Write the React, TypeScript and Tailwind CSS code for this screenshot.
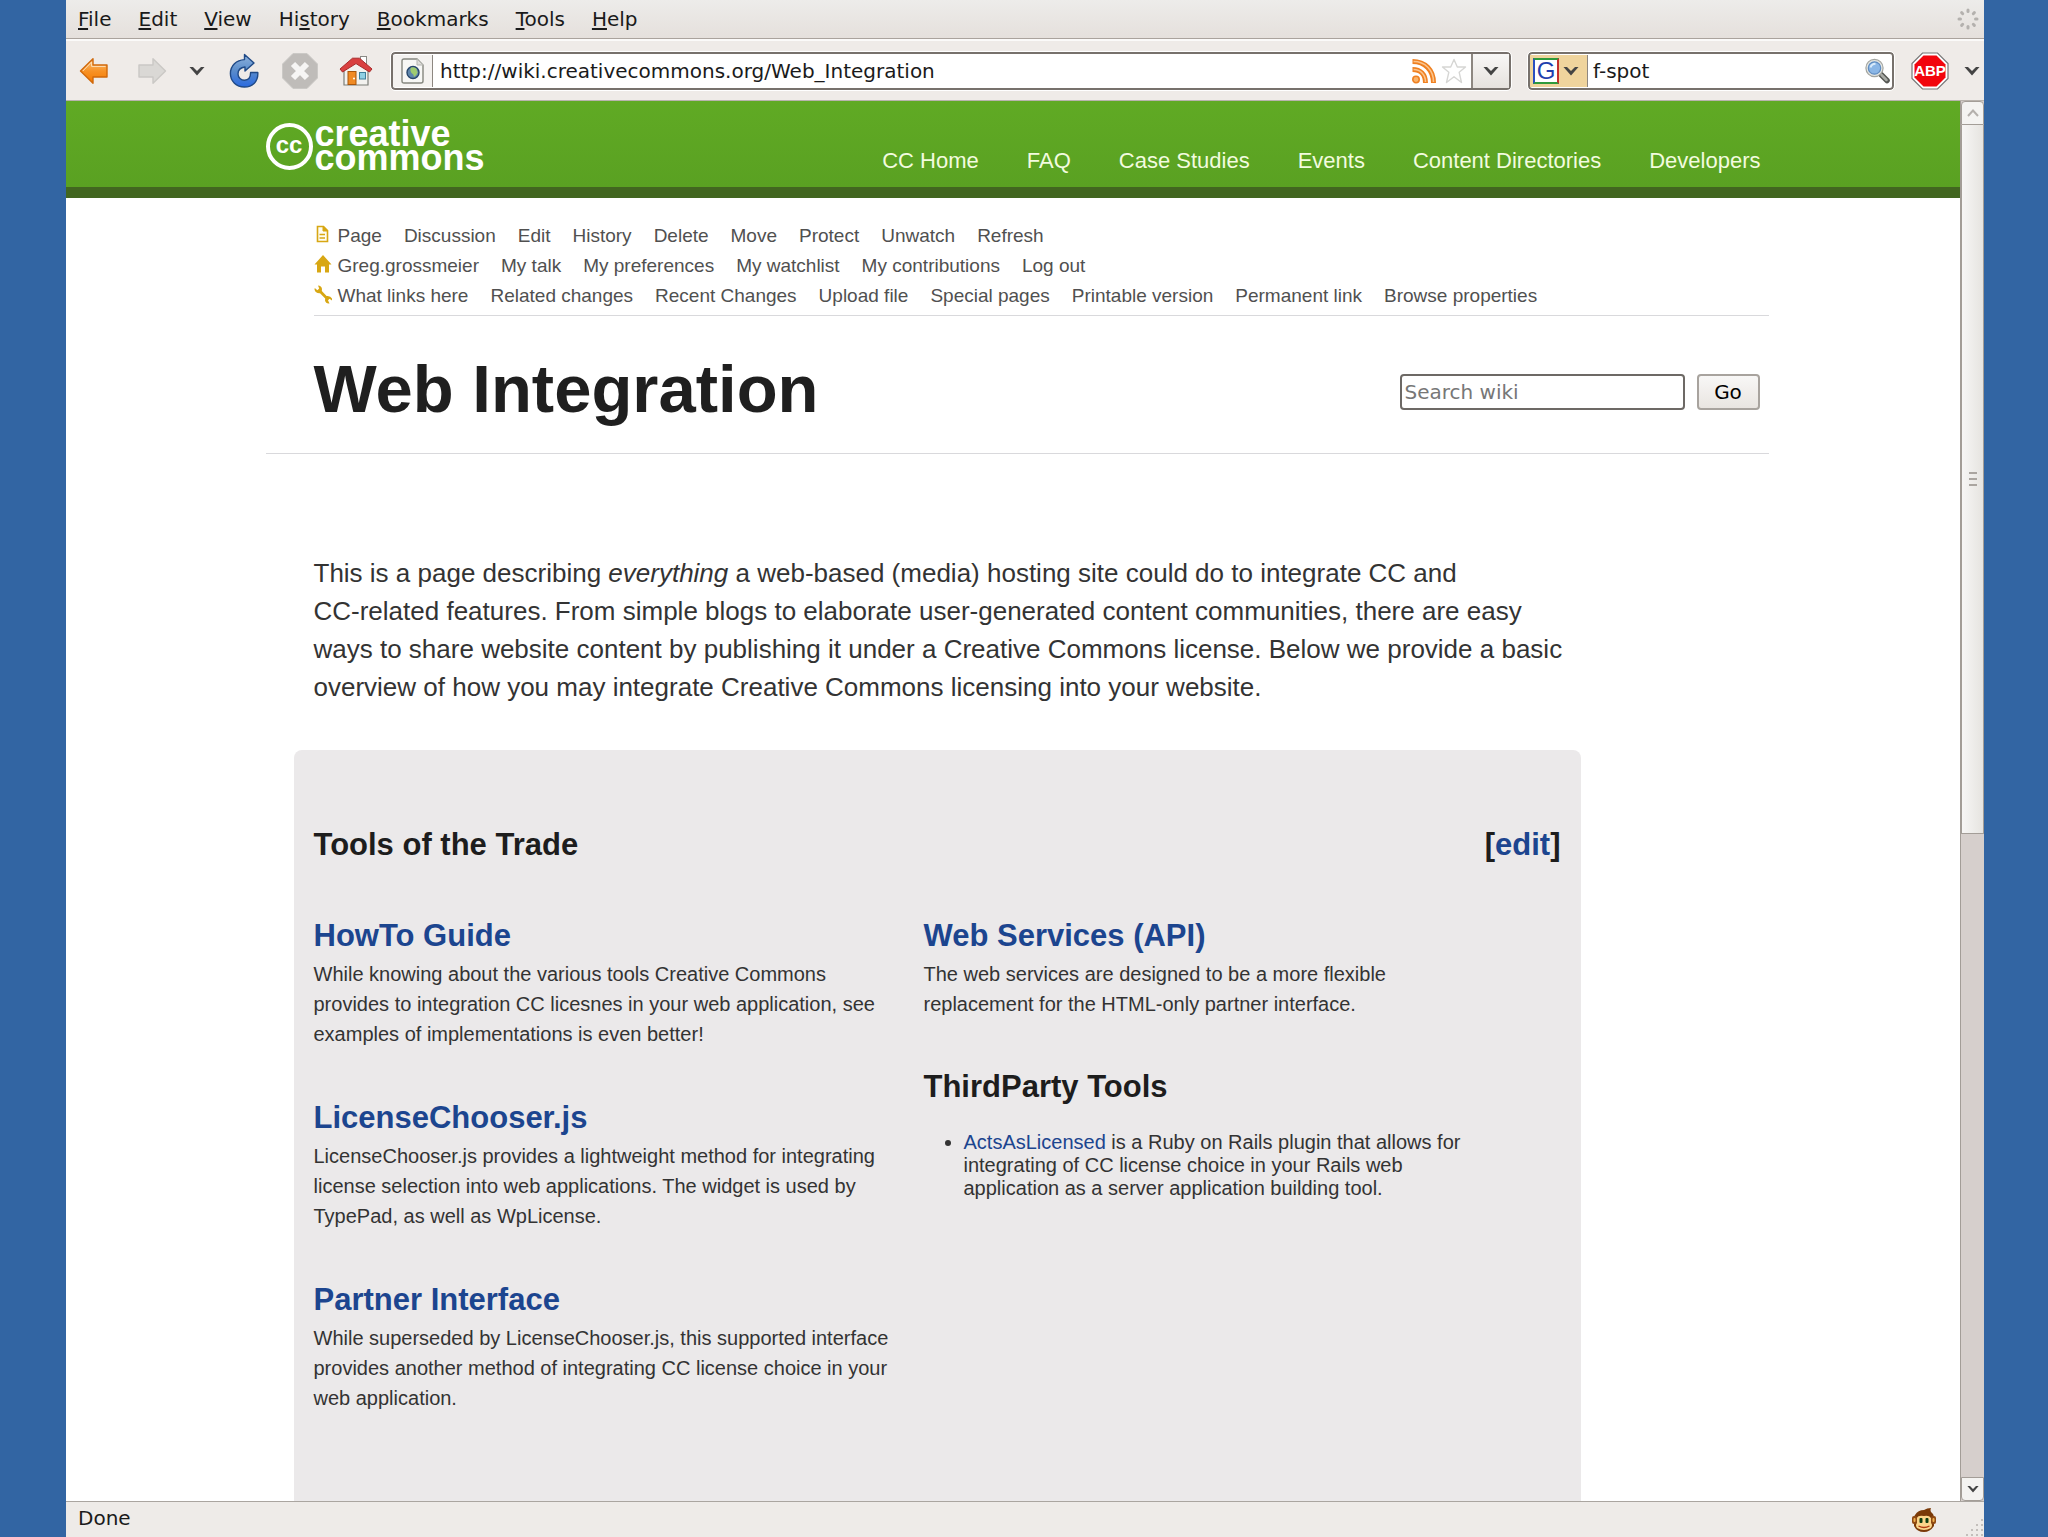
import type { ReactNode } from "react";

type MenuItem = {
  before: string;
  key: string;
  after: string;
};

type ToolSectionProps = {
  title: string;
  href?: string;
  children: ReactNode;
};

const menuItems: MenuItem[] = [
  { before: "", key: "F", after: "ile" },
  { before: "", key: "E", after: "dit" },
  { before: "", key: "V", after: "iew" },
  { before: "Hi", key: "s", after: "tory" },
  { before: "", key: "B", after: "ookmarks" },
  { before: "", key: "T", after: "ools" },
  { before: "", key: "H", after: "elp" },
];

const siteLinks = [
  "CC Home",
  "FAQ",
  "Case Studies",
  "Events",
  "Content Directories",
  "Developers",
];

const pageActions = [
  "Page",
  "Discussion",
  "Edit",
  "History",
  "Delete",
  "Move",
  "Protect",
  "Unwatch",
  "Refresh",
];

const userActions = [
  "Greg.grossmeier",
  "My talk",
  "My preferences",
  "My watchlist",
  "My contributions",
  "Log out",
];

const wikiTools = [
  "What links here",
  "Related changes",
  "Recent Changes",
  "Upload file",
  "Special pages",
  "Printable version",
  "Permanent link",
  "Browse properties",
];

function Chevron({ className }: { className: string }) {
  return (
    <svg viewBox="0 0 16 10" className={className} aria-hidden="true">
      <path d="M0.5 1H4L8 5L12 1H15.500L8 9.500Z" fill="#444" />
    </svg>
  );
}

function BackIcon() {
  return (
    <svg viewBox="0 0 30 28" className="h-7 w-[30px]" aria-hidden="true">
      <defs>
        <linearGradient id="back" x1="0" y1="0" x2="0" y2="1">
          <stop offset="0" stopColor="#fcc27c" />
          <stop offset="0.5" stopColor="#f79226" />
          <stop offset="1" stopColor="#f57900" />
        </linearGradient>
      </defs>
      <path
        d="M1.5 14 14 1.8V8H28V20H14V26.2Z"
        fill="url(#back)"
        stroke="#d0680a"
        strokeWidth="1.4"
        strokeLinejoin="round"
      />
      <path d="M3.8 14 12.6 5V9.4H26.6" fill="none" stroke="#fde0b8" />
    </svg>
  );
}

function ForwardIcon() {
  return (
    <svg viewBox="0 0 30 28" className="h-7 w-[30px]" aria-hidden="true">
      <path
        d="M28.5 14 16 1.8V8H2V20H16V26.2Z"
        fill="#dad8d5"
        stroke="#cac8c5"
        strokeWidth="1.4"
        strokeLinejoin="round"
      />
    </svg>
  );
}

function ReloadIcon() {
  return (
    <svg viewBox="0 0 30 36" className="h-9 w-[30px]" aria-hidden="true">
      <defs>
        <linearGradient id="reload" x1="0" y1="0" x2="0" y2="1">
          <stop offset="0" stopColor="#8fb3dd" />
          <stop offset="0.5" stopColor="#5a8ccb" />
          <stop offset="1" stopColor="#2a6ae0" />
        </linearGradient>
      </defs>
      <path
        d="M15.5 1.500 25 10 16 18V14C11 14.500 9 17.500 9 21C9 24.500 12 27.200 15.500 27.200C19 27.200 21.600 25 21.600 19.500H28.800C29.400 28.600 23.400 34 15.400 34C7.400 34 1.400 28.400 1.400 20.600C1.400 12.600 7.400 7 15.500 6.600Z"
        fill="url(#reload)"
        stroke="#204a87"
        strokeWidth="1.4"
        strokeLinejoin="round"
      />
    </svg>
  );
}

function StopIcon() {
  return (
    <svg viewBox="0 0 38 38" className="size-[38px]" aria-hidden="true">
      <path
        d="M12 1.5H26L36.5 12V26L26 36.5H12L1.5 26V12Z"
        fill="#bfbcb9"
        stroke="#cbc9c6"
      />
      <path
        d="M12 12 26 26M26 12 12 26"
        stroke="#f6f5f4"
        strokeWidth="6"
      />
    </svg>
  );
}

function HomeIcon() {
  return (
    <svg viewBox="0 0 34 32" className="h-8 w-[34px]" aria-hidden="true">
      <rect x="21.5" y="1.5" width="6" height="10" fill="#fff" stroke="#8a8a86" />
      <path d="M5 15 17 5 29 15V30H5Z" fill="#f3f2ef" stroke="#7d7f79" strokeWidth="1.2" />
      <path
        d="M1 14 13.5 3.2H20.5L33 14 30.5 17 17 8.6 3.5 17Z"
        fill="#d94040"
        stroke="#a82a2a"
        strokeLinejoin="round"
      />
      <rect x="9" y="16.5" width="8" height="13" fill="#f08a24" stroke="#a8560c" />
      <circle cx="15" cy="23.5" r="1" fill="#fff" />
      <rect x="20.5" y="17.5" width="6" height="6.5" fill="#8fd0e4" stroke="#3c7f9c" />
    </svg>
  );
}

function SiteIcon() {
  return (
    <svg viewBox="0 0 24 26" className="h-[26px] w-6" aria-hidden="true">
      <path
        d="M3 1H16L22 7V23Q22 25 20 25H3Q1 25 1 23V3Q1 1 3 1Z"
        fill="#f7f7f5"
        stroke="#85877f"
        strokeWidth="1.4"
      />
      <path d="M16 1V7H22" fill="#dededa" stroke="#b4b5b0" />
      <circle cx="12" cy="14.5" r="6" fill="#5f86ac" stroke="#27466b" strokeWidth="1.4" />
      <path
        d="M10 9.500Q15 8.500 16 12Q15 13 16.800 14Q15.500 18 13 19Q13 16 10.500 15Q8.500 12 10 9.500Z"
        fill="#9fcb70"
      />
    </svg>
  );
}

function FeedIcon() {
  return (
    <svg viewBox="0 0 26 26" className="size-[26px]" aria-hidden="true">
      <g fill="none" stroke="#ef8021" strokeWidth="5">
        <path d="M1.5 3.5C14 3.5 22.5 12 22.5 25" />
        <path d="M1.5 11.5C9.5 11.5 14.5 16.5 14.5 25" />
      </g>
      <g fill="none" stroke="#fbc48c" strokeWidth="1.6">
        <path d="M2.5 3.5C14 3.5 22.5 12 22.5 24" />
        <path d="M2.5 11.5C9.5 11.5 14.5 16.5 14.5 24" />
      </g>
      <circle cx="5" cy="21.5" r="3.2" fill="#f9b269" stroke="#ef8021" strokeWidth="1.6" />
    </svg>
  );
}

function StarIcon() {
  return (
    <svg viewBox="0 0 26 26" className="size-[26px]" aria-hidden="true">
      <path
        d="M13 1.5 16.3 9H24.5L18.2 14.3 20.5 24.5 13 18.8 5.5 24.5 7.8 14.3 1.5 9H9.7Z"
        fill="#fff"
        stroke="#d6d6d4"
        strokeWidth="1.4"
        strokeLinejoin="round"
      />
    </svg>
  );
}

function MagnifierIcon() {
  return (
    <svg viewBox="0 0 26 26" className="size-[26px]" aria-hidden="true">
      <path d="M16 15.5 23 22.5" stroke="#555753" strokeWidth="5.5" strokeLinecap="round" />
      <path d="M17.5 17 22.5 22" stroke="#a9aba6" strokeWidth="2.5" strokeLinecap="round" />
      <circle cx="10.5" cy="10" r="8.6" fill="#e4e6e3" stroke="#a3a5a0" strokeWidth="1.2" />
      <circle cx="10.5" cy="10" r="6.2" fill="#8ab6e6" stroke="#5f8cc0" strokeWidth="1.2" />
      <path d="M6.5 9.5Q7.5 6 11.5 5.8" fill="none" stroke="#d8eafa" strokeWidth="2" />
    </svg>
  );
}

function AdblockIcon() {
  return (
    <svg viewBox="0 0 38 38" className="size-[38px]" aria-hidden="true">
      <path
        d="M11.5 1H26.5L37 11.5V26.5L26.5 37H11.5L1 26.5V11.5Z"
        fill="#fff"
        stroke="#777"
        strokeWidth="1.2"
      />
      <path d="M12.5 3.5H25.5L34.5 12.5V25.5L25.5 34.5H12.5L3.5 25.500V12.5Z" fill="#f2050d" />
      <text
        x="19"
        y="24"
        textAnchor="middle"
        fontFamily="Liberation Sans, sans-serif"
        fontSize="15"
        fontWeight="700"
        fill="#fff"
      >
        ABP
      </text>
    </svg>
  );
}

function Spinner() {
  const angles = [0, 45, 90, 135, 180, 225, 270, 315];

  return (
    <svg viewBox="0 0 24 24" className="size-6" aria-hidden="true">
      {angles.map((angle) => (
        <rect
          key={angle}
          x="10.5"
          y="1.5"
          width="3"
          height="4.5"
          rx="1.5"
          fill="#b4b1ae"
          transform={`rotate(${angle} 12 12)`}
        />
      ))}
    </svg>
  );
}

function PageIcon() {
  return (
    <svg viewBox="0 0 18 18" className="size-[18px]" aria-hidden="true">
      <path
        d="M3.5 1.5H9.5L13.5 5.5V16.5H3.5Z"
        fill="#fffdf3"
        stroke="#d8a713"
        strokeWidth="1.6"
      />
      <path d="M9 2V6H13Z" fill="#d8a713" stroke="#d8a713" />
      <path d="M5.5 9.5H11M5.5 13H11" stroke="#d8a713" strokeWidth="1.4" />
    </svg>
  );
}

function HouseIcon() {
  return (
    <svg viewBox="0 0 18 18" className="size-[18px]" aria-hidden="true">
      <path d="M9 0 17.5 9.5H15V17.5H11V11.5H7V17.5H3V9.5H0.5Z" fill="#d8a713" />
    </svg>
  );
}

function WrenchIcon() {
  return (
    <svg viewBox="0 0 19 19" className="size-[19px]" aria-hidden="true">
      <path
        d="M4 0.5Q7.5 0.5 8 4L7.8 6L12.6 11Q16.5 10.5 18 13.5V15.5L15.5 13.8L14 15.2L15.5 18.5Q11.8 19 11 15.5L11.2 13.6L6 8.2Q1.5 8.5 0.5 4.5L0.8 3L3.4 5.2L5.2 3.6Z"
        fill="#d8a713"
      />
    </svg>
  );
}

function MonkeyIcon() {
  return (
    <svg viewBox="0 0 26 26" className="size-[26px]" aria-hidden="true">
      <path
        d="M4 8Q7 3 13 3Q16 1 20 1Q19 3 20 5Q23 7 23 11V19Q19 25 13 25Q6 25 3 19V11Q3 9 4 8Z"
        fill="#7a3a08"
      />
      <rect x="1" y="9" width="5" height="8" rx="2" fill="#8f4a12" />
      <rect x="20" y="9" width="5" height="8" rx="2" fill="#8f4a12" />
      <rect x="2.5" y="11" width="2" height="4" rx="1" fill="#f0b050" />
      <rect x="21.5" y="11" width="2" height="4" rx="1" fill="#f0b050" />
      <path
        d="M6 11Q7 8 13 9Q18 8 20 11V16Q22 18 20 21Q13 25 6 21Q4 18 6 16Z"
        fill="#fbd58a"
      />
      <rect x="8.5" y="11" width="3" height="5" rx="1" fill="#0d3d10" />
      <rect x="14.5" y="11" width="3" height="5" rx="1" fill="#0d3d10" />
      <path d="M7.5 19Q13 22 18.5 19" fill="none" stroke="#b03a10" strokeWidth="1.4" />
    </svg>
  );
}

function ResizeGrip() {
  const rows = [1, 2, 3, 4];

  return (
    <svg viewBox="0 0 20 20" className="size-5 self-end" aria-hidden="true">
      {rows.map((row) =>
        rows
          .filter((column) => column + row > 4)
          .map((column) => (
            <circle
              key={`${row}-${column}`}
              cx={column * 5 - 2}
              cy={row * 5 - 2}
              r="1"
              fill="#b5b1ac"
            />
          )),
      )}
    </svg>
  );
}

function MenuBar() {
  return (
    <div className="flex h-[39px] shrink-0 items-center justify-between border-b border-[#aaa39d] bg-linear-to-b from-[#edecea] to-[#e5e0dc] pr-1 pl-3">
      <nav className="flex gap-[27px]">
        {menuItems.map((item) => (
          <button key={item.key + item.after} type="button" className="text-xl leading-7">
            {item.before}
            <span className="underline decoration-2 underline-offset-2">{item.key}</span>
            {item.after}
          </button>
        ))}
      </nav>
      <Spinner />
    </div>
  );
}

function Toolbar() {
  return (
    <div className="flex h-[62px] shrink-0 items-center border-t-2 border-b border-t-[#fbfaf9] border-b-[#b9b3ad] bg-[#efebe8] pl-[13px]">
      <div className="flex items-center">
        <button type="button" aria-label="Back" className="mr-7">
          <BackIcon />
        </button>
        <button type="button" aria-label="Forward" className="mr-[22px]">
          <ForwardIcon />
        </button>
        <button type="button" aria-label="Recent pages" className="mr-6">
          <Chevron className="h-[10px] w-4" />
        </button>
        <button type="button" aria-label="Reload" className="mr-[22px]">
          <ReloadIcon />
        </button>
        <button type="button" aria-label="Stop" className="mr-5">
          <StopIcon />
        </button>
        <button type="button" aria-label="Home" className="mr-[18px]">
          <HomeIcon />
        </button>
      </div>

      <div className="flex h-[38px] flex-1 items-stretch rounded border-2 border-[#77716c] bg-white outline outline-white">
        <div className="my-px flex w-10 items-center justify-center border-r border-[#8d8781] bg-[#f4f2f0]">
          <SiteIcon />
        </div>
        <input
          type="text"
          aria-label="Location"
          defaultValue="http://wiki.creativecommons.org/Web_Integration"
          className="min-w-0 flex-1 bg-transparent pl-[7px] text-xl outline-none"
        />
        <div className="flex items-center gap-1 pr-1">
          <FeedIcon />
          <StarIcon />
        </div>
        <button
          type="button"
          aria-label="Show history"
          className="flex w-[38px] items-center justify-center border-l-2 border-[#8d8781] bg-linear-to-b from-[#f8f7f6] to-[#e6e2de]"
        >
          <Chevron className="h-[10px] w-4" />
        </button>
      </div>

      <form
        className="ml-[17px] flex h-[38px] w-[366px] items-stretch rounded border-2 border-[#77716c] bg-white outline outline-white"
        onSubmit={(event) => event.preventDefault()}
      >
        <button
          type="button"
          aria-label="Search engine"
          className="my-px flex w-[58px] items-center gap-1 border-r border-[#8d8781] bg-[#efd49d] pl-[3px]"
        >
          <span className="flex size-[26px] items-center justify-center border-2 border-t-[#2f9a3c] border-r-[#c5302c] border-b-[#2f9a3c] border-l-[#2b4fc0] bg-white font-['Liberation_Sans',sans-serif] text-2xl leading-none text-[#1f3fae]">
            G
          </span>
          <Chevron className="h-[10px] w-4" />
        </button>
        <input
          type="text"
          aria-label="Search the web"
          defaultValue="f-spot"
          className="min-w-0 flex-1 bg-transparent pl-[5px] text-xl outline-none"
        />
        <button type="submit" aria-label="Search" className="pr-0.5">
          <MagnifierIcon />
        </button>
      </form>

      <button type="button" aria-label="Adblock Plus" className="ml-[17px]">
        <AdblockIcon />
      </button>
      <button type="button" aria-label="Adblock Plus menu" className="mr-1 ml-[15px]">
        <Chevron className="h-[10px] w-4" />
      </button>
    </div>
  );
}

function Logo() {
  return (
    <a href="#" className="mb-[17px] flex items-end gap-0.5 font-bold text-white">
      <span className="flex size-[47px] items-center justify-center rounded-full border-4 border-white pb-1 text-2xl leading-none">
        cc
      </span>
      <span className="text-4xl leading-6">
        creative
        <br />
        commons
      </span>
    </a>
  );
}

function SiteHeader() {
  return (
    <header className="border-b-[11px] border-[#426620] bg-linear-to-b from-[#60aa24] to-[#5aa122] pl-2">
      <div className="mx-auto flex h-[86px] max-w-[1503px] items-end justify-between pr-2">
        <Logo />
        <nav className="mb-3 flex gap-12">
          {siteLinks.map((link) => (
            <a key={link} href="#" className="text-[22px] leading-7 text-[#f2fbdf]">
              {link}
            </a>
          ))}
        </nav>
      </div>
    </header>
  );
}

function ActionRow({ icon, links }: { icon: ReactNode; links: string[] }) {
  return (
    <div className="flex h-[30px] items-center">
      <span className="w-6 pb-1">{icon}</span>
      <ul className="flex gap-[22px]">
        {links.map((link) => (
          <li key={link}>
            <a href="#" className="text-[19px] leading-[30px] whitespace-nowrap text-[#505050]">
              {link}
            </a>
          </li>
        ))}
      </ul>
    </div>
  );
}

function ToolSection({ title, href, children }: ToolSectionProps) {
  return (
    <section>
      <h3 className="text-[31px] leading-10 font-bold text-[#1d1d1d]">
        {href ? (
          <a href={href} className="text-[#1c458f]">
            {title}
          </a>
        ) : (
          title
        )}
      </h3>
      {children}
    </section>
  );
}

function WikiPage() {
  return (
    <main className="min-w-0 flex-1 overflow-hidden bg-white font-['Liberation_Sans',Arial,sans-serif] text-[#333]">
      <SiteHeader />

      <div className="pl-2">
        <div className="mx-auto max-w-[1503px]">
          <div className="ml-12 border-b border-[#d9d9dc] pt-[23px] pb-1">
            <ActionRow icon={<PageIcon />} links={pageActions} />
            <ActionRow icon={<HouseIcon />} links={userActions} />
            <ActionRow icon={<WrenchIcon />} links={wikiTools} />
          </div>

          <div className="flex items-center justify-between border-b border-[#d9d9dc] pt-[33px] pr-[9px] pb-6 pl-12">
            <h1 className="text-[67px] leading-[80px] font-bold text-[#1f1f1f]">Web Integration</h1>
            <form
              className="flex gap-3 pt-1.5 font-['DejaVu_Sans',sans-serif] text-xl"
              onSubmit={(event) => event.preventDefault()}
            >
              <input
                type="text"
                aria-label="Search wiki"
                placeholder="Search wiki"
                className="h-9 w-[285px] rounded border-2 border-[#6d6965] bg-white px-[3px] outline-none placeholder:text-[#777]"
              />
              <button
                type="submit"
                className="h-9 w-[63px] rounded border-2 border-[#a8a39e] bg-linear-to-b from-[#f8f7f6] to-[#e9e5e1] leading-8 text-black"
              >
                Go
              </button>
            </form>
          </div>

          <p className="mt-[100px] ml-12 text-[26px] leading-[38px] whitespace-nowrap">
            This is a page describing <em>everything</em> a web-based (media) hosting site could do
            to integrate CC and
            <br />
            CC-related features. From simple blogs to elaborate user-generated content communities,
            there are easy
            <br />
            ways to share website content by publishing it under a Creative Commons license. Below
            we provide a basic
            <br />
            overview of how you may integrate Creative Commons licensing into your website.
          </p>

          <div className="mt-11 mr-[188px] ml-7 min-h-[800px] rounded-t-lg bg-[#ebe9ea] px-5 pt-[75px]">
            <div className="flex justify-between text-[31px] leading-10 font-bold text-[#1d1d1d]">
              <h2>Tools of the Trade</h2>
              <span>
                [
                <a href="#" className="text-[#1c458f]">
                  edit
                </a>
                ]
              </span>
            </div>

            <div className="mt-[51px] grid grid-cols-[590px_1fr] gap-x-5">
              <div className="flex flex-col gap-[49px]">
                <ToolSection title="HowTo Guide" href="#">
                  <p className="mt-[3px] pr-2 text-xl leading-[30px]">
                    While knowing about the various tools Creative Commons provides to integration
                    CC licesnes in your web application, see examples of implementations is even
                    better!
                  </p>
                </ToolSection>
                <ToolSection title="LicenseChooser.js" href="#">
                  <p className="mt-[3px] pr-2 text-xl leading-[30px]">
                    LicenseChooser.js provides a lightweight method for integrating license
                    selection into web applications. The widget is used by TypePad, as well as
                    WpLicense.
                  </p>
                </ToolSection>
                <ToolSection title="Partner Interface" href="#">
                  <p className="mt-[3px] pr-2 text-xl leading-[30px]">
                    While superseded by LicenseChooser.js, this supported interface provides
                    another method of integrating CC license choice in your web application.
                  </p>
                </ToolSection>
              </div>

              <div className="flex flex-col gap-12">
                <ToolSection title="Web Services (API)" href="#">
                  <p className="mt-[3px] max-w-[560px] text-xl leading-[30px]">
                    The web services are designed to be a more flexible replacement for the
                    HTML-only partner interface.
                  </p>
                </ToolSection>
                <ToolSection title="ThirdParty Tools">
                  <ul className="mt-6 list-disc pl-10 text-xl leading-[23px]">
                    <li className="max-w-[540px]">
                      <a href="#" className="text-[#1c458f]">
                        ActsAsLicensed
                      </a>{" "}
                      is a Ruby on Rails plugin that allows for integrating of CC license choice in
                      your Rails web application as a server application building tool.
                    </li>
                  </ul>
                </ToolSection>
              </div>
            </div>
          </div>
        </div>
      </div>
    </main>
  );
}

function ScrollBar() {
  return (
    <div className="flex w-6 shrink-0 flex-col border-l border-[#a39d97] bg-[#d6cfcc]">
      <button
        type="button"
        aria-label="Scroll up"
        className="flex h-6 shrink-0 items-center justify-center rounded-t border border-[#a39d97] bg-[#f4f3f1]"
      >
        <svg viewBox="0 0 12 8" className="h-2 w-3" aria-hidden="true">
          <path d="M1 7 6 1.5 11 7" fill="none" stroke="#b4b0ac" strokeWidth="2" />
        </svg>
      </button>
      <div className="flex min-h-0 flex-1 flex-col">
        <div className="flex flex-[11] flex-col items-center justify-center gap-1 border border-t-0 border-[#a39d97] bg-linear-to-r from-[#f7f6f5] to-[#e6e4e0]">
          <span className="h-0.5 w-2 bg-[#aaa5a0]" />
          <span className="h-0.5 w-2 bg-[#aaa5a0]" />
          <span className="h-0.5 w-2 bg-[#aaa5a0]" />
        </div>
        <div className="flex-[10]" />
      </div>
      <button
        type="button"
        aria-label="Scroll down"
        className="flex h-6 shrink-0 items-center justify-center rounded-b border border-[#a39d97] bg-[#f4f3f1]"
      >
        <Chevron className="h-2 w-3" />
      </button>
    </div>
  );
}

function StatusBar() {
  return (
    <footer className="flex h-9 shrink-0 items-center justify-between border-t border-[#aaa5a0] bg-[#eeebe8] pl-3">
      <span className="pb-1 text-xl leading-7">Done</span>
      <div className="flex items-center gap-[27px] self-stretch">
        <MonkeyIcon />
        <ResizeGrip />
      </div>
    </footer>
  );
}

export default function App() {
  return (
    <div className="h-screen bg-[#3265a3] pr-16 pl-[66px]">
      <div className="flex h-full flex-col overflow-hidden bg-[#efebe8] font-['DejaVu_Sans',sans-serif] text-[#1a1a1a]">
        <MenuBar />
        <Toolbar />
        <div className="flex min-h-0 flex-1">
          <WikiPage />
          <ScrollBar />
        </div>
        <StatusBar />
      </div>
    </div>
  );
}
